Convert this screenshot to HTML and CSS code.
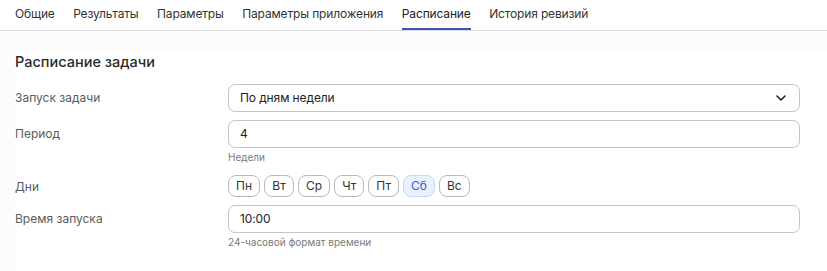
FILE: index.html
```html
<!DOCTYPE html>
<html lang="ru">
<head>
<meta charset="utf-8">
<link rel="stylesheet" href="styles.css">
</head>
<body>
<nav class="tabs">
  <span class="tab">Общие</span>
  <span class="tab">Результаты</span>
  <span class="tab">Параметры</span>
  <span class="tab">Параметры приложения</span>
  <span class="tab active">Расписание</span>
  <span class="tab">История ревизий</span>
</nav>
<main class="page">
  <section class="card">
    <h2 class="title">Расписание задачи</h2>
    <div class="form">
      <div class="label l-select">Запуск задачи</div>
      <div class="field">
        <div class="control select">
          <span>По дням недели</span>
          <svg class="chev" width="12" height="8" viewBox="0 0 12 8"><path d="M2 2l4 4 4-4" fill="none" stroke="#222" stroke-width="1.6" stroke-linecap="round" stroke-linejoin="round"/></svg>
        </div>
      </div>
      <div class="label l-input">Период</div>
      <div class="field">
        <div class="control">4</div>
        <div class="hint">Недели</div>
      </div>
      <div class="label l-days">Дни</div>
      <div class="field">
        <div class="days">
          <span class="day">Пн</span>
          <span class="day">Вт</span>
          <span class="day">Ср</span>
          <span class="day">Чт</span>
          <span class="day">Пт</span>
          <span class="day on">Сб</span>
          <span class="day">Вс</span>
        </div>
      </div>
      <div class="label l-input">Время запуска</div>
      <div class="field">
        <div class="control">10:00</div>
        <div class="hint">24-часовой формат времени</div>
      </div>
    </div>
  </section>
</main>
</body>
</html>
```
FILE: styles.css
```css
* { box-sizing: border-box; }
html, body { margin: 0; padding: 0; }
body {
  font-family: Inter, "Noto Sans", sans-serif;
  color: #222;
  background: #fcfcfc;
  width: 827px;
  height: 271px;
  overflow: hidden;
}
.tabs {
  display: flex;
  gap: 18.5px;
  height: 31px;
  padding-left: 15px;
  background: #fff;
  border-bottom: 1px solid #dcdce0;
}
.tab {
  font-size: 12px;
  line-height: 27px;
  padding: 0;
  color: #333;
  border-bottom: 2px solid transparent;
  height: 30px;
  letter-spacing: -0.15px;
}
.tab.active {
  border-bottom-color: #3f51b5;
  color: #222;
}
.page {
  padding: 21px 0 0 15px;
  height: 240px;
}
.card {
  background: #fff;
  height: 100%;
  padding: 0 27px 0 0;
}
.title {
  margin: 0;
  font-size: 14.5px;
  font-weight: 500;
  line-height: 18px;
  padding-top: 1px;
  color: #2a2a2a;
}
.form {
  display: grid;
  grid-template-columns: 213px 1fr;
  row-gap: 8px;
  margin-top: 13px;
}
.label {
  font-size: 12px;
  color: #5c5c5c;
  line-height: 14px;
}
.l-select, .l-input { padding-top: 7px; }
.l-days { padding-top: 5px; }
.field { display: flex; flex-direction: column; }
.control {
  height: 28px;
  border: 1px solid #c4c4cc;
  border-radius: 7px;
  padding: 0 12px 0 11px;
  font-size: 12px;
  letter-spacing: -0.1px;
  line-height: 26px;
  color: #222;
  display: flex;
  align-items: center;
  justify-content: space-between;
}
.hint {
  font-size: 10px;
  color: #7a7a7a;
  line-height: 14px;
  margin-top: 2px;
  margin-bottom: 3px;
}
.days { display: flex; gap: 4px; }
.day {
  font-size: 12px;
  line-height: 20px;
  height: 22px;
  min-width: 30px;
  padding: 0 7px;
  text-align: center;
  border: 1px solid #b8b8c0;
  border-radius: 8px;
  color: #333;
}
.day.on {
  background: #eaf1fe;
  border-color: #c9d6f2;
  color: #3a5bd0;
}
```
